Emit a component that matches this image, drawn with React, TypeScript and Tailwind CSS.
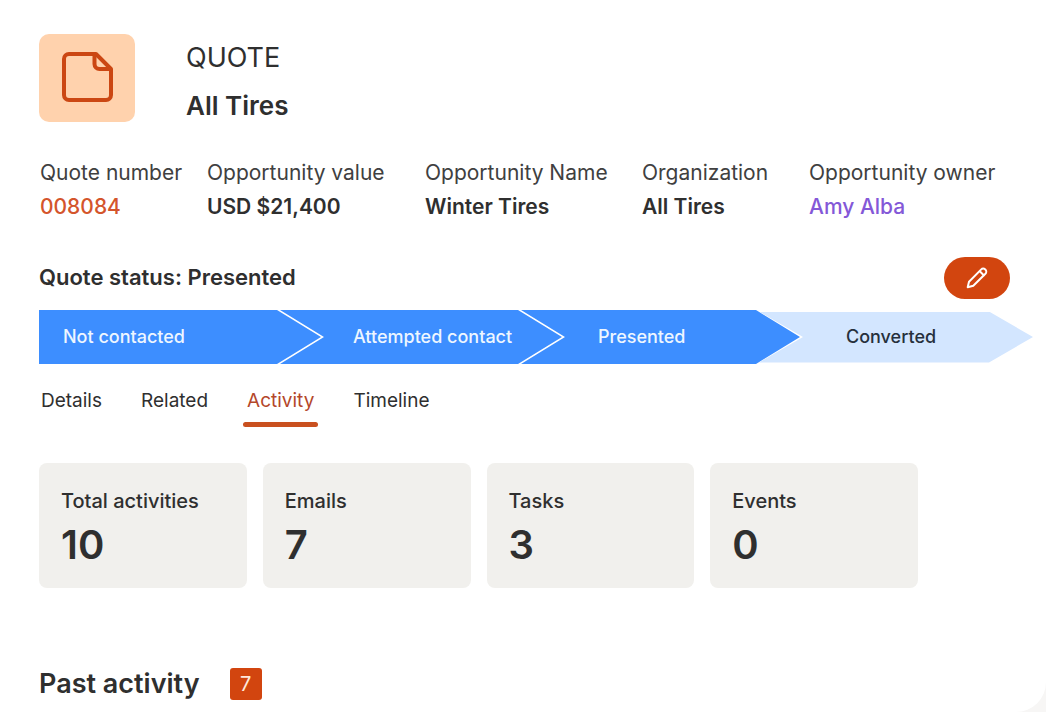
import { type ReactNode } from "react";
import clsx from "clsx";

type Field = {
  label: string;
  value: ReactNode;
};

const fields: Field[] = [
  {
    label: "Quote number",
    value: (
      <a href="#quote" className="font-medium text-[#d4552c]">
        008084
      </a>
    ),
  },
  { label: "Opportunity value", value: "USD $21,400" },
  { label: "Opportunity Name", value: "Winter Tires" },
  { label: "Organization", value: "All Tires" },
  {
    label: "Opportunity owner",
    value: (
      <a href="#owner" className="font-medium text-[#8458d8]">
        Amy Alba
      </a>
    ),
  },
];

const steps = [
  { name: "Not contacted", className: "pl-6" },
  { name: "Attempted contact", className: "-ml-[41px] pl-[73px]" },
  { name: "Presented", className: "-ml-[41px] pl-[77px]" },
  { name: "Converted", className: "-ml-[41px] pl-[87px]" },
];

const currentStep = 2;

const tabs = ["Details", "Related", "Activity", "Timeline"];

const stats = [
  { label: "Total activities", count: 10 },
  { label: "Emails", count: 7 },
  { label: "Tasks", count: 3 },
  { label: "Events", count: 0 },
];

export default function App() {
  return (
    <div className="bg-[#f7f6f5] font-['Inter',sans-serif] text-[#2f2f2f]">
      <main className="min-h-screen rounded-br-[30px] bg-white pt-[34px] pl-[39px]">
        <Header />
        <Fields />
        <Status />
        <Tabs />
        <Stats />
        <section className="mt-20 flex items-center gap-[30px]">
          <h2 className="text-[27px] leading-8 font-semibold">Past activity</h2>
          <span className="flex size-8 items-center justify-center rounded-[3px] bg-[#d2450f] text-xl text-[#ffe9dc]">
            7
          </span>
        </section>
      </main>
    </div>
  );
}

function Header() {
  return (
    <header className="flex gap-[51px]">
      <div className="flex h-[88px] w-24 items-center justify-center rounded-[10px] bg-[#ffd2ad]">
        <NoteIcon />
      </div>
      <div>
        <p className="text-[27px] leading-[48px]">QUOTE</p>
        <h1 className="text-[26px] leading-[48px] font-semibold">All Tires</h1>
      </div>
    </header>
  );
}

function Fields() {
  return (
    <dl className="mt-[26px] mr-9 grid grid-cols-[167fr_218fr_217fr_167fr_201fr] pl-px text-[21px] leading-[34px]">
      {fields.map((field) => (
        <div key={field.label} className="whitespace-nowrap">
          <dt className="text-[#404040]">{field.label}</dt>
          <dd className="font-semibold">{field.value}</dd>
        </div>
      ))}
    </dl>
  );
}

function Status() {
  return (
    <section>
      <div className="mt-[33px] mr-9 flex items-center justify-between">
        <h2 className="pb-0.5 text-[22px] leading-8 font-semibold">Quote status: Presented</h2>
        <button
          type="button"
          aria-label="Edit status"
          className="flex h-[42px] w-[66px] items-center justify-center rounded-full bg-[#d2450f] text-white"
        >
          <PencilIcon />
        </button>
      </div>
      <ol className="mt-[11px] mr-[13px] grid grid-cols-[282fr_241fr_238fr_233fr] items-center text-lg font-medium">
        {steps.map((step, i) => (
          <li
            key={step.name}
            className={clsx(
              "flex items-center whitespace-nowrap",
              step.className,
              i === 0
                ? "[clip-path:polygon(0_0,calc(100%_-_44px)_0,100%_50%,calc(100%_-_44px)_100%,0_100%)]"
                : "[clip-path:polygon(0_0,calc(100%_-_44px)_0,100%_50%,calc(100%_-_44px)_100%,0_100%,44px_50%)]",
              i <= currentStep
                ? "h-[54px] bg-[#3d8eff] text-[#eef6ff]"
                : "h-[51px] bg-[#d3e6ff] text-[#26303c]",
            )}
          >
            {step.name}
          </li>
        ))}
      </ol>
    </section>
  );
}

function Tabs() {
  return (
    <nav className="mt-[22px] -ml-0.5 flex gap-[31px] text-[19px] leading-[30px]">
      {tabs.map((tab) => (
        <a
          key={tab}
          href={`#${tab.toLowerCase()}`}
          className={clsx(
            "flex flex-col gap-1.5 whitespace-nowrap",
            tab === "Activity" && "text-[#b4472a]",
          )}
        >
          <span className="px-1">{tab}</span>
          {tab === "Activity" && <span className="h-[5px] rounded-full bg-[#c9501f]" />}
        </a>
      ))}
    </nav>
  );
}

function Stats() {
  return (
    <ul className="mt-9 mr-32 grid grid-cols-4 gap-4">
      {stats.map((stat) => (
        <li key={stat.label} className="rounded-lg bg-[#f1f0ed] px-[22px] pt-[23px] pb-[18px]">
          <p className="text-xl leading-[30px] font-medium whitespace-nowrap">{stat.label}</p>
          <p className="mt-1 text-[40px] leading-[50px] font-semibold">{stat.count}</p>
        </li>
      ))}
    </ul>
  );
}

function NoteIcon() {
  return (
    <svg
      width="52"
      height="52"
      viewBox="0 0 52 52"
      fill="none"
      stroke="#cb4713"
      strokeWidth="4"
      strokeLinejoin="round"
      aria-hidden="true"
    >
      <path d="M35 2H8a5 5 0 0 0-5 5V43a5 5 0 0 0 5 5h37a5 5 0 0 0 5-5V17Z" />
      <path d="M33.500 2.500V12a5 5 0 0 0 5 5H50" />
    </svg>
  );
}

function PencilIcon() {
  return (
    <svg
      width="22"
      height="22"
      viewBox="0 0 22 22"
      fill="none"
      stroke="currentColor"
      strokeWidth="2"
      strokeLinecap="round"
      strokeLinejoin="round"
      aria-hidden="true"
    >
      <path d="M1.700 20.300l1.300-5.600L15 2.600a3 3 0 0 1 4.400 4.200L7.300 18.700Z" />
      <path d="M14 4.500l3.800 3.800" />
    </svg>
  );
}
